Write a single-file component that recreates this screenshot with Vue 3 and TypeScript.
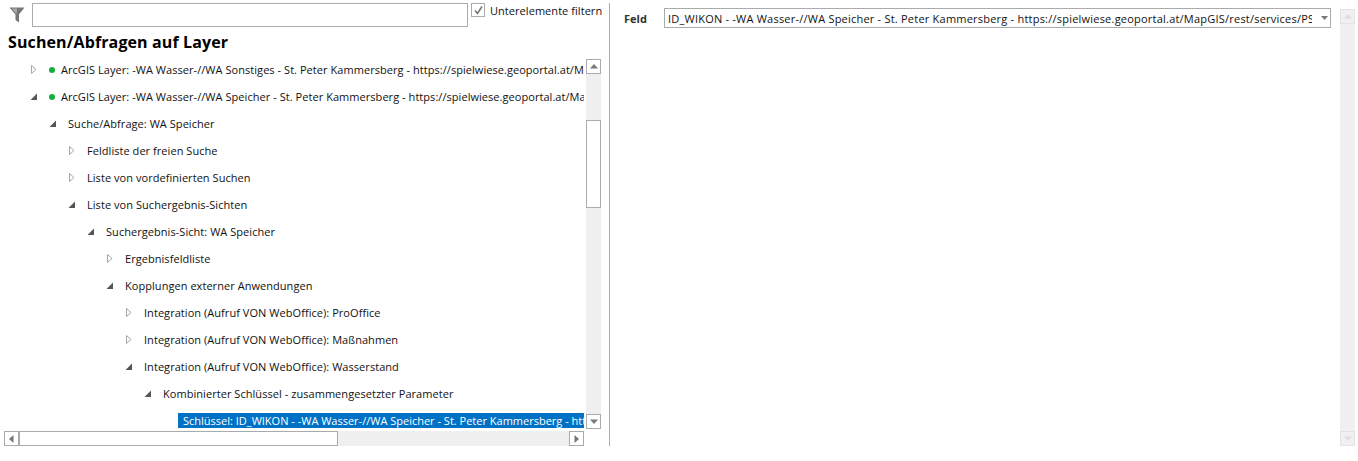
<script setup lang="ts">
interface Row { level: number; state?: 'open' | 'closed'; text: string; dot?: boolean; selected?: boolean }
const rows: Row[] = [
  { level: 0, state: 'closed', dot: true, text: 'ArcGIS Layer: -WA Wasser-//WA Sonstiges - St. Peter Kammersberg - https://spielwiese.geoportal.at/MapGIS/rest/services/PS' },
  { level: 0, state: 'open', dot: true, text: 'ArcGIS Layer: -WA Wasser-//WA Speicher - St. Peter Kammersberg - https://spielwiese.geoportal.at/MapGIS/rest/services/PS' },
  { level: 1, state: 'open', text: 'Suche/Abfrage: WA Speicher' },
  { level: 2, state: 'closed', text: 'Feldliste der freien Suche' },
  { level: 2, state: 'closed', text: 'Liste von vordefinierten Suchen' },
  { level: 2, state: 'open', text: 'Liste von Suchergebnis-Sichten' },
  { level: 3, state: 'open', text: 'Suchergebnis-Sicht: WA Speicher' },
  { level: 4, state: 'closed', text: 'Ergebnisfeldliste' },
  { level: 4, state: 'open', text: 'Kopplungen externer Anwendungen' },
  { level: 5, state: 'closed', text: 'Integration (Aufruf VON WebOffice): ProOffice' },
  { level: 5, state: 'closed', text: 'Integration (Aufruf VON WebOffice): Maßnahmen' },
  { level: 5, state: 'open', text: 'Integration (Aufruf VON WebOffice): Wasserstand' },
  { level: 6, state: 'open', text: 'Kombinierter Schlüssel - zusammengesetzter Parameter' },
  { level: 7, selected: true, text: 'Schlüssel: ID_WIKON - -WA Wasser-//WA Speicher - St. Peter Kammersberg - https://spielwiese.geoportal.at/MapGIS/rest' },
]
const indent = (r: Row) => ({ paddingLeft: `${28 + r.level * 19}px` })
</script>

<template>
  <div class="page">
    <section class="left">
      <div class="filter">
        <svg class="funnel" width="16" height="18" viewBox="0 0 16 18">
          <path d="M0.5 1.5H15.5L10 8.5V16.5L6.5 14V8.5Z" fill="#777" />
          <path d="M3 2.5H8L7.5 8Z" fill="#aaa" />
        </svg>
        <div class="filter-input"></div>
        <span class="check">
          <svg width="11" height="11" viewBox="0 0 11 11"><path d="M2 5.5L4.5 8.5L9 1.5" fill="none" stroke="#777" stroke-width="1.6" /></svg>
        </span>
        <span class="check-label">Unterelemente filtern</span>
      </div>
      <h1 class="heading">Suchen/Abfragen auf Layer</h1>
      <div class="tree-wrap">
        <div class="tree-col">
          <div class="tree">
            <div v-for="r in rows" :key="r.text" class="row" :style="indent(r)">
              <span class="toggle">
                <svg v-if="r.state === 'closed'" width="7" height="9" viewBox="0 0 7 9"><path d="M1.5 0.5L6 4.5L1.5 8.5Z" fill="#fff" stroke="#a6a6a6" /></svg>
                <svg v-else-if="r.state === 'open'" width="8" height="8" viewBox="0 0 8 8"><path d="M0.5 7L7 0.5V7Z" fill="#555" /></svg>
              </span>
              <span v-if="r.dot" class="dot"></span>
              <span class="label" :class="{ selected: r.selected }">{{ r.text }}</span>
            </div>
          </div>
          <div class="hbar">
            <span class="btn"><svg width="5" height="8" viewBox="0 0 5 8"><path d="M4.5 0V8L0 4Z" fill="#777" /></svg></span>
            <span class="hthumb"></span>
            <span class="hspace"></span>
            <span class="btn"><svg width="5" height="8" viewBox="0 0 5 8"><path d="M0.5 0V8L5 4Z" fill="#777" /></svg></span>
          </div>
        </div>
        <div class="vbar">
          <span class="btn"><svg width="8" height="5" viewBox="0 0 8 5"><path d="M0 4.5H8L4 0Z" fill="#777" /></svg></span>
          <span class="vgap"></span>
          <span class="vthumb"></span>
          <span class="vspace"></span>
          <span class="btn"><svg width="8" height="5" viewBox="0 0 8 5"><path d="M0 0.5H8L4 5Z" fill="#777" /></svg></span>
        </div>
      </div>
    </section>

    <section class="right">
      <div class="field">
        <span class="field-label">Feld</span>
        <div class="combo">
          <span class="combo-text">ID_WIKON - -WA Wasser-//WA Speicher - St. Peter Kammersberg - https://spielwiese.geoportal.at/MapGIS/rest/services/PS_WA/MapServer</span>
          <svg width="7" height="4" viewBox="0 0 7 4"><path d="M0 0H7L3.5 4Z" fill="#777" /></svg>
        </div>
      </div>
      <div class="rbar">
        <span class="rbtn"><svg width="8" height="5" viewBox="0 0 8 5"><path d="M0 4.5H8L4 0Z" fill="#ddd" /></svg></span>
        <span class="rbtn"><svg width="8" height="5" viewBox="0 0 8 5"><path d="M0 0.5H8L4 5Z" fill="#ddd" /></svg></span>
      </div>
    </section>
  </div>
</template>

<style>
html, body { margin: 0; background: #fff; }
</style>

<style scoped>
.page {
  width: 1358px;
  height: 461px;
  display: flex;
  overflow: hidden;
  background: #fff;
  font-family: "Open Sans", "Noto Sans", sans-serif;
  font-size: 11px;
  color: #111;
}
.left {
  width: 609px;
  height: 446px;
  flex: none;
  display: flex;
  flex-direction: column;
}
.filter {
  display: flex;
  align-items: flex-start;
  height: 30px;
  padding: 3px 0 0 9px;
  box-sizing: border-box;
}
.funnel { margin-top: 3px; margin-right: 7px; flex: none; }
.filter-input {
  width: 436px;
  height: 24px;
  flex: none;
  box-sizing: border-box;
  border: 1px solid #ababab;
}
.check {
  width: 14px;
  height: 14px;
  margin-left: 3px;
  box-sizing: border-box;
  border: 1px solid #ababab;
  display: flex;
  align-items: center;
  justify-content: center;
  flex: none;
}
.check-label { margin: 1px 0 0 5px; line-height: 14px; white-space: nowrap; letter-spacing: 0.05px; }
.heading {
  margin: 0;
  padding-left: 8px;
  height: 26px;
  line-height: 24px;
  font-size: 16px;
  font-weight: 700;
  letter-spacing: 0.12px;
  color: #000;
  white-space: nowrap;
}
.tree-wrap { display: flex; flex: 1; min-height: 0; padding-left: 4px; }
.tree-col { width: 580px; flex: none; display: flex; flex-direction: column; }
.tree { flex: 1; min-height: 0; overflow: hidden; margin-left: -4px; width: 584px; }
.row {
  height: 27px;
  display: flex;
  align-items: center;
  white-space: nowrap;
  box-sizing: border-box;
  letter-spacing: 0.05px;
}
.toggle {
  width: 11px;
  flex: none;
  display: flex;
  align-items: center;
  justify-content: center;
  margin-right: 10px;
}
.dot {
  width: 6px;
  height: 6px;
  border-radius: 50%;
  background: #10b040;
  flex: none;
  margin-right: 6px;
}
.label { line-height: 16px; }
.label.selected {
  background: #0072c6;
  color: #fff;
  padding-left: 5px;
  margin-left: -4px;
  line-height: 15px;
  letter-spacing: 0;
  flex: 1;
  min-width: 0;
  overflow: hidden;
}
.hbar { height: 15px; display: flex; flex: none; background: #f0f0f0; }
.btn {
  width: 15px;
  height: 15px;
  flex: none;
  box-sizing: border-box;
  border: 1px solid #ababab;
  background: #fff;
  display: flex;
  align-items: center;
  justify-content: center;
}
.hthumb { width: 319px; box-sizing: border-box; border: 1px solid #ababab; background: #fff; flex: none; }
.hspace { flex: 1; }
.vbar {
  width: 15px;
  height: 370px;
  margin: 3px 0 0 2px;
  flex: none;
  background: #f0f0f0;
  display: flex;
  flex-direction: column;
}
.vgap { height: 46px; flex: none; }
.vthumb { height: 88px; flex: none; box-sizing: border-box; border: 1px solid #ababab; background: #fff; }
.vspace { flex: 1; }
.right {
  flex: 1;
  height: 443px;
  margin-top: 3px;
  border-left: 1px solid #ababab;
  display: flex;
  justify-content: space-between;
  box-sizing: border-box;
}
.field { display: flex; align-items: center; height: 20px; margin-top: 5px; padding-left: 14px; }
.field-label { width: 40px; font-weight: 700; color: #333; flex: none; }
.combo {
  width: 667px;
  height: 20px;
  box-sizing: border-box;
  border: 1px solid #ababab;
  display: flex;
  align-items: center;
  padding: 0 2px 0 3px;
  gap: 9px;
  overflow: hidden;
}
.combo svg { flex: none; }
.combo-text { flex: 1; min-width: 0; overflow: hidden; white-space: nowrap; letter-spacing: 0.22px; }
.rbar {
  width: 15px;
  margin: 6px 3px 0 0;
  background: #f0f0f0;
  display: flex;
  flex-direction: column;
  justify-content: space-between;
}
.rbtn {
  height: 15px;
  box-sizing: border-box;
  border: 1px solid #e3e3e3;
  display: flex;
  align-items: center;
  justify-content: center;
}
</style>
